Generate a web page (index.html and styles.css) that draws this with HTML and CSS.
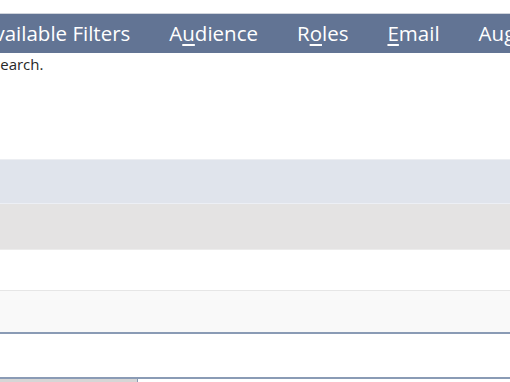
FILE: index.html
```html
<!DOCTYPE html>
<html lang="en">
<head>
    <meta charset="UTF-8">
    <title>Search</title>
    <link rel="stylesheet" href="styles.css">
</head>
<body>
    <div class="page">
        <nav class="tabs">
            <a class="tab" href="#">Available Filters</a>
            <a class="tab" href="#">A<u>u</u>dience</a>
            <a class="tab" href="#">R<u>o</u>les</a>
            <a class="tab" href="#"><u>E</u>mail</a>
            <a class="tab" href="#">Au<u>g</u>ment</a>
        </nav>
        <p class="hint">Select the filters to narrow your search.</p>

        <div class="results">
            <div class="row row-selected"></div>
            <div class="row row-grey"></div>
            <div class="row row-plain"></div>
            <div class="row row-alt"></div>
            <div class="row row-gap"></div>
            <div class="footer">
                <div class="footer-cell"></div>
                <div class="footer-rest"></div>
            </div>
        </div>
    </div>
</body>
</html>
```

FILE: styles.css
```css
:root {
    --theme-tab-bg: rgb(98, 116, 148);
    --theme-tab-edge: rgb(208, 212, 220);
    --theme-text: rgb(40, 40, 40);
    --theme-line-blue: rgb(138, 155, 181);
    --theme-font-family: "Open Sans", "Noto Sans", sans-serif;
}

html,
body {
    margin: 0;
    padding: 0;
    overflow: hidden;
    background-color: white;
    font-family: var(--theme-font-family);
}

.page {
    padding-top: 13px;
}

.tabs {
    display: flex;
    border-top: 1px solid var(--theme-tab-edge);
    background-color: var(--theme-tab-bg);
    height: 39px;
    margin-left: -38px;
    white-space: nowrap;
    overflow: hidden;
}

.tab {
    flex: none;
    padding: 0 19.5px;
    font-size: 20.5px;
    line-height: 39px;
    color: white;
    text-decoration: none;
}

.tab u {
    text-underline-offset: 3px;
}

.hint {
    margin: 1px 0 0 -231px;
    font-size: 15px;
    line-height: 20px;
    color: var(--theme-text);
    white-space: nowrap;
}

.results {
    margin-top: 85px;
}

.row-selected {
    border-top: 1px solid rgb(236, 238, 242);
    background-color: rgb(224, 228, 236);
    border-bottom: 1px solid rgb(236, 239, 245);
    height: 43px;
}

.row-grey {
    background-color: rgb(228, 227, 227);
    border-bottom: 1px solid rgb(236, 236, 236);
    height: 45px;
}

.row-plain {
    height: 40px;
}

.row-alt {
    border-top: 1px solid rgb(230, 230, 230);
    background-color: rgb(249, 249, 249);
    border-bottom: 2px solid var(--theme-line-blue);
    height: 41px;
}

.row-gap {
    height: 43px;
}

.footer {
    display: flex;
    border-top: 2px solid var(--theme-line-blue);
    height: 20px;
}

.footer-cell {
    width: 137px;
    background-color: rgb(214, 214, 214);
    border-right: 1px solid var(--theme-line-blue);
}

.footer-rest {
    flex: 1;
}
```
